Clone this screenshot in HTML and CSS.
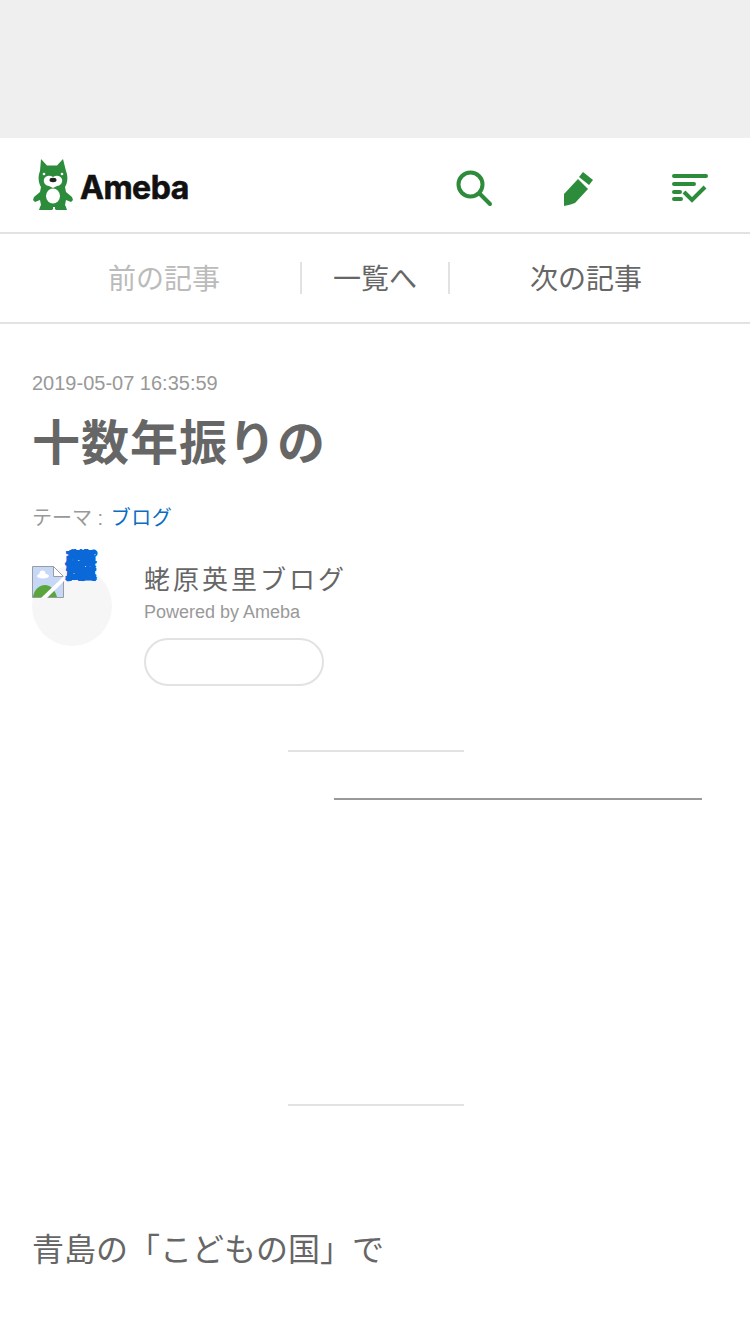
FILE: index.html
```html
<!DOCTYPE html>
<html lang="ja">
<head>
  <meta charset="UTF-8">
  <meta name="viewport" content="width=device-width, initial-scale=1.0">
  <title>十数年振りの | 蛯原英里ブログ</title>
  <link rel="stylesheet" href="styles.css">
</head>
<body>
  <div class="ad-space"></div>

  <header class="site-header">
    <a class="logo" href="#">
      <!-- Ameba mascot -->
      <svg class="logo-mark" width="42" height="52" viewBox="0 0 42 52">
        <path fill="#2d8c3c" d="M9 1l6 6.500h10L31 1l3 12c2 5 2 11-1 16l1 5 6 5 1 3-2 2-5-2-1 5 1 2 1 3-1 1h-9l-2-2v-2h-2v2l-2 2H8l-1-1 1-3 1-2-1-5-5 2-2-2 1-3 6-5 1-5c-3-5-3-11-1-16z"/>
        <ellipse cx="21" cy="38" rx="7" ry="7.500" fill="#fff"/>
        <path fill="#fff" d="M12 21c2-4 6-4 9-2 3-2 7-2 9 2 1 4-2 7-5 7l-4 2-4-2c-3 0-6-3-5-7z"/>
        <ellipse cx="21" cy="22" rx="3.500" ry="2.200" fill="#222"/>
        <circle cx="12" cy="16" r="1.300" fill="#fff"/>
        <circle cx="30" cy="16" r="1.300" fill="#fff"/>
      </svg>
      <span class="logo-text">Ameba</span>
    </a>
    <nav class="header-icons">
      <a class="header-icon" href="#">
        <svg width="38" height="38" viewBox="0 0 38 38" fill="none" stroke="#2d8c3c" stroke-width="4" stroke-linecap="round">
          <circle cx="15.500" cy="15.500" r="12"/>
          <path d="M24.500 24.500L35 35"/>
        </svg>
      </a>
      <a class="header-icon" href="#">
        <svg width="34" height="36" viewBox="0 0 34 36" fill="#2d8c3c">
          <path d="M2 24L16 9l10 10-13 14q-5 2-11 3z"/>
          <path d="M21 2l10 8-4 5-10-8z"/>
        </svg>
      </a>
      <a class="header-icon header-icon-list" href="#">
        <svg width="36" height="30" viewBox="0 0 36 30" fill="none" stroke="#2d8c3c" stroke-width="4" stroke-linecap="round">
          <path d="M2 3h32M2 11h20M2 19h6M2 26h7"/>
          <path d="M12 19l8 8 13-13" stroke-linecap="butt"/>
        </svg>
      </a>
    </nav>
  </header>

  <nav class="pager">
    <a class="pager-link pager-prev" href="#">前の記事</a>
    <a class="pager-link pager-list" href="#">一覧へ</a>
    <a class="pager-link pager-next" href="#">次の記事</a>
  </nav>

  <article class="entry">
    <p class="entry-date">2019-05-07 16:35:59</p>
    <h1 class="entry-title">十数年振りの</h1>
    <p class="entry-theme">テーマ : <a href="#">ブログ</a></p>

    <div class="profile">
      <a class="profile-photo" href="#">
        <!-- broken image placeholder -->
        <svg class="photo-broken" width="32" height="32" viewBox="0 0 32 32">
          <path d="M.5.500h21l10 10v21H.5z" fill="#c6d8f6" stroke="#999da3"/>
          <path d="M21.500.500v10h10z" fill="#fff" stroke="#999da3"/>
          <ellipse cx="11" cy="10" rx="6" ry="2.500" fill="#fff"/>
          <circle cx="10.500" cy="7.500" r="3" fill="#fff"/>
          <path d="M1 31c1-8 7-12 12-12 6 0 10 5 12 12z" fill="#5aa63c"/>
          <path d="M15 32L32 15v-5L9 32z" fill="#fff"/>
        </svg>
        <span class="photo-alt">プロフィール画像蛯原英里</span>
      </a>
      <div class="profile-body">
        <p class="profile-name">蛯原英里ブログ</p>
        <p class="profile-sub">Powered by Ameba</p>
        <a class="follow-button" href="#"></a>
      </div>
    </div>

    <hr class="rule-short rule-first">
    <div class="rule-long"></div>
    <hr class="rule-short rule-second">

    <p class="entry-text">青島の「こどもの国」で</p>
  </article>
</body>
</html>
```

FILE: styles.css
```css
:root {
  --green: #2d8c3c;
  --text: #666;
  --muted: #999;
  --line: #e2e2e2;
  --link: #0b6cc4;
}

body {
  font-family: 'Liberation Sans', 'Noto Sans CJK JP', sans-serif;
  background-color: #fff;
  color: var(--text);
  margin: 0;
  overflow-x: hidden;
}

a {
  color: inherit;
  text-decoration: none;
}

p, h1 {
  margin: 0;
}

.ad-space {
  height: 138px;
  background-color: #efefef;
}

.site-header {
  height: 94px;
  padding: 0 32px;
  display: flex;
  align-items: center;
  justify-content: space-between;
  border-bottom: 2px solid var(--line);
}

.logo {
  display: flex;
  align-items: center;
  gap: 6px;
  margin-top: -2px;
}

.logo-text {
  margin-top: 6px;
  font-family: 'Inter', 'Liberation Sans', sans-serif;
  font-size: 32px;
  font-weight: 700;
  letter-spacing: -0.5px;
  color: #111;
  -webkit-text-stroke: 0.6px #111;
}

.header-icons {
  display: flex;
  align-items: center;
  gap: 69px;
  margin-top: 5px;
  margin-right: 10px;
}

.header-icon {
  display: flex;
}

.header-icon-list {
  margin-left: 7px;
}

.pager {
  height: 88px;
  display: flex;
  align-items: center;
  border-bottom: 2px solid var(--line);
  font-size: 28px;
}

.pager-link {
  height: 32px;
  line-height: 36px;
  text-align: center;
}

.pager-prev {
  width: 300px;
  padding-left: 28px;
  box-sizing: border-box;
  color: #bbb;
}

.pager-list {
  width: 146px;
  border-left: 2px solid var(--line);
  border-right: 2px solid var(--line);
}

.pager-next {
  flex: 1;
  padding-right: 28px;
}

.entry {
  padding: 47px 32px 0;
}

.entry-date {
  font-size: 20px;
  line-height: 24px;
  color: var(--muted);
}

.entry-title {
  margin-top: 15px;
  font-size: 48px;
  line-height: 68px;
  font-weight: 700;
  letter-spacing: 1px;
}

.entry-theme {
  margin-top: 26px;
  font-size: 20px;
  line-height: 28px;
  color: var(--muted);
}

.entry-theme a {
  margin-left: 2px;
  letter-spacing: 0.5px;
  color: var(--link);
}

.profile {
  margin-top: 34px;
  display: flex;
  gap: 32px;
}

.profile-photo {
  position: relative;
  flex: none;
  width: 80px;
  height: 80px;
  border-radius: 50%;
  background-color: #f6f6f6;
}

.photo-broken {
  position: absolute;
  left: 0;
  top: 0;
  display: block;
}

/* alt text squeezed into the narrow box beside the icon */
.photo-alt {
  position: absolute;
  left: 32px;
  top: 0;
  width: 32px;
  font-size: 34px;
  line-height: 0;
  color: #0a68d8;
  word-break: break-all;
}

.profile-name {
  font-size: 26px;
  line-height: 28px;
  letter-spacing: 3px;
}

.profile-sub {
  margin-top: 6px;
  font-size: 18px;
  line-height: 24px;
  color: var(--muted);
}

.follow-button {
  display: block;
  width: 176px;
  height: 44px;
  margin-top: 14px;
  border: 2px solid var(--line);
  border-radius: 24px;
}

.rule-short {
  width: 176px;
  height: 2px;
  margin: 0 0 0 256px;
  border: none;
  background-color: var(--line);
}

.rule-first {
  margin-top: 64px;
}

.rule-long {
  height: 2px;
  margin: 46px 16px 0 302px;
  background-color: #999;
}

.rule-second {
  margin-top: 304px;
}

.entry-text {
  margin-top: 124px;
  font-size: 32px;
  line-height: 40px;
}
```
